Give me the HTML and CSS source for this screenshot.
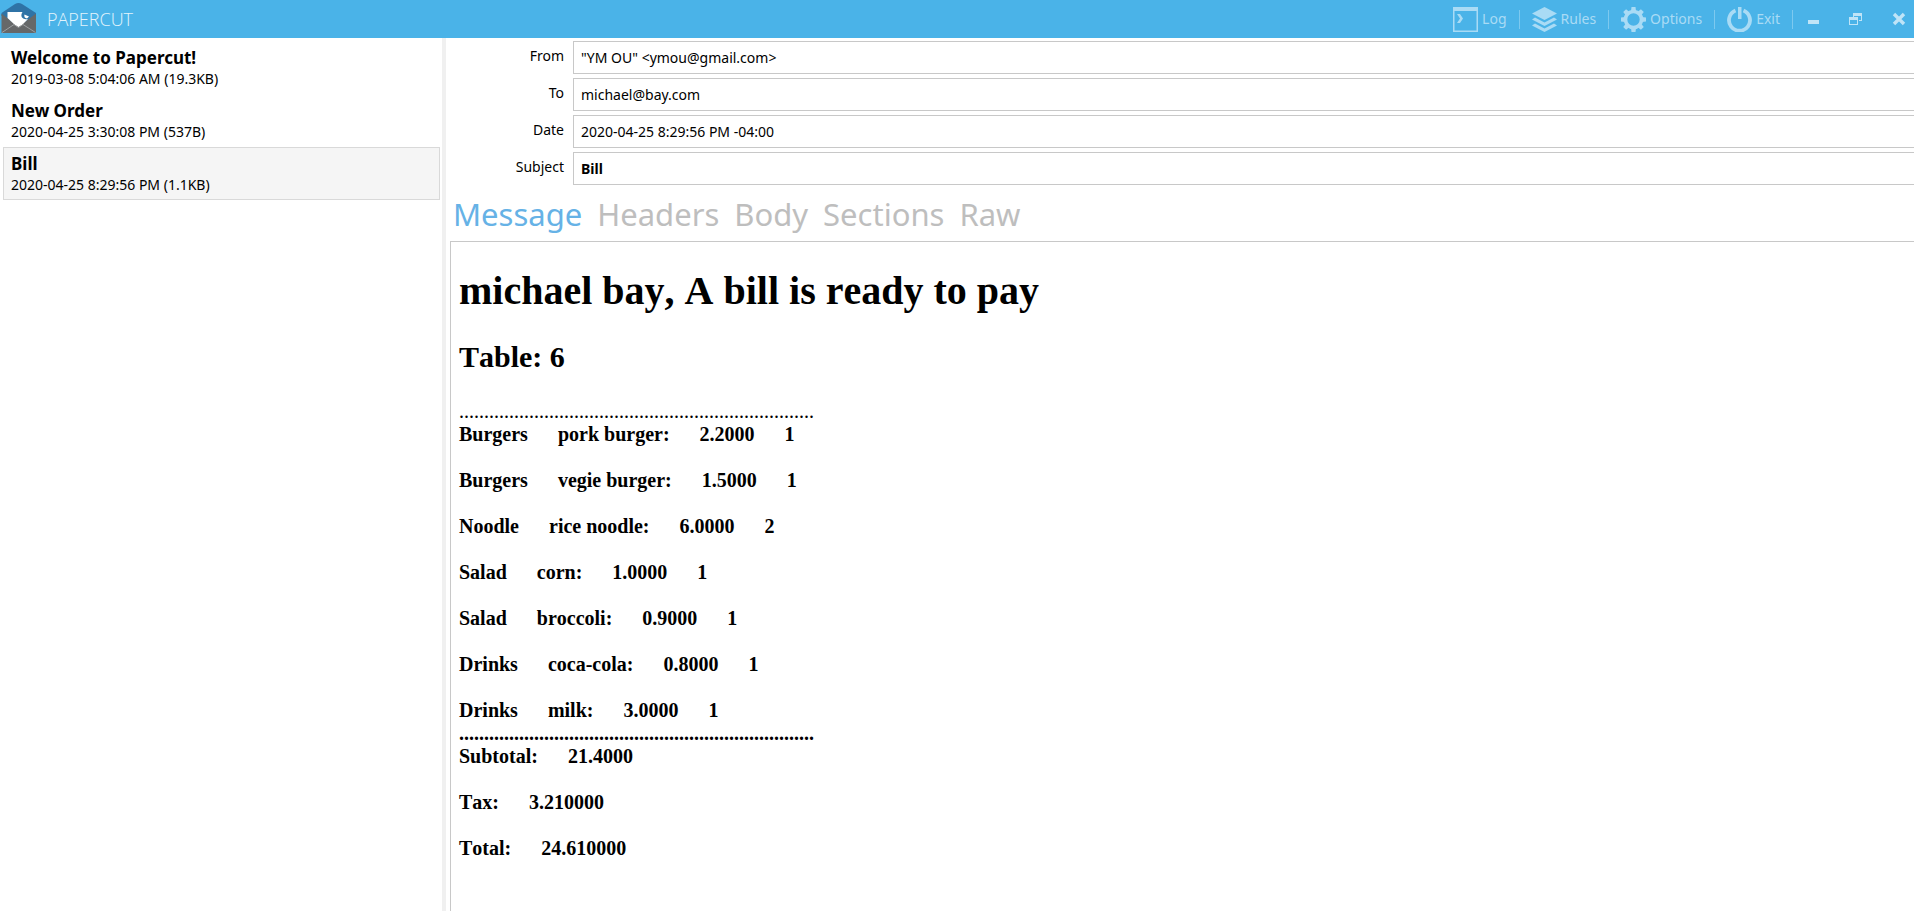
FILE: index.html
```
<!DOCTYPE html>
<html lang="en">
<head>
<meta charset="utf-8">
<title>Papercut</title>
<link rel="stylesheet" href="styles.css">
</head>
<body>
<div class="app">
  <header class="titlebar">
    <svg class="logo" viewBox="0 0 38 38" aria-hidden="true">
      <path fill="#2f73a6" d="M1.500 13 15 4Q18.500 2 22 4L36 13V16H1.500z"/>
      <path fill="#666869" d="M1.500 14H36V33H1.500z"/>
      <path fill="#2f73a6" d="M2 14H35.500L22 24H15z"/>
      <path fill="#fff" d="M7.500 12H22.500Q20.500 15 22 17.500Q24 20 28 19L22 25 18.500 27 15 25 7.500 18z"/>
      <path fill="#fff" d="M24.500 14.500 29 16.500 27 18.500Q23.500 18 24.500 14.500z"/>
      <path fill="none" stroke="#9c9fa1" stroke-width="1" d="M2 32.500 14 24.500 18.500 27.500 23 24.500 35.500 32.500"/>
    </svg>
    <h1 class="brand">PAPERCUT</h1>
    <nav class="commands" aria-label="Commands">
      <button class="command" type="button">
        <svg class="icon" viewBox="0 0 25 25" aria-hidden="true"><path fill-rule="evenodd" d="M0 0H25V25H0zM1.500 4V23.500H23.500V4z"/><path d="M4 7H7L10 11.500 7 16H4L7 11.500z"/></svg>
        Log
      </button>
      <button class="command" type="button">
        <svg class="icon" viewBox="0 0 25 25" aria-hidden="true"><path d="M12.500 0 25 6.500 12.500 13 0 6.500zM3 10.500 12.500 15.500 22 10.500 25 12.500 12.500 19 0 12.500zM3 16.500 12.500 21.500 22 16.500 25 18.500 12.500 25 0 18.500z"/></svg>
        Rules
      </button>
      <button class="command" type="button">
        <svg class="icon" viewBox="0 0 25 25" aria-hidden="true"><circle cx="12.500" cy="12.500" r="8" fill="none" stroke="currentColor" stroke-width="3.600"/><path id="tooth" d="M10 4 10.500 0H14.500L15 4z"/><use href="#tooth" transform="rotate(45 12.500 12.500)"/><use href="#tooth" transform="rotate(90 12.500 12.500)"/><use href="#tooth" transform="rotate(135 12.500 12.500)"/><use href="#tooth" transform="rotate(180 12.500 12.500)"/><use href="#tooth" transform="rotate(225 12.500 12.500)"/><use href="#tooth" transform="rotate(270 12.500 12.500)"/><use href="#tooth" transform="rotate(315 12.500 12.500)"/></svg>
        Options
      </button>
      <button class="command" type="button">
        <svg class="icon" viewBox="0 0 25 25" aria-hidden="true"><path d="M8.500 3.500A10.500 10.500 0 1 0 16.500 3.500" fill="none" stroke="currentColor" stroke-width="3.800"/><path d="M11 0H14.500V12H11z"/></svg>
        Exit
      </button>
    </nav>
    <div class="window-buttons">
      <button class="window-button" type="button" aria-label="Minimize"><svg viewBox="0 0 14 14" aria-hidden="true"><path d="M1 8H12V12H1z"/></svg></button>
      <button class="window-button" type="button" aria-label="Restore"><svg viewBox="0 0 14 14" aria-hidden="true"><path fill-rule="evenodd" d="M4 1H13V9H10V8H12V4H5V5H4zM0 5H9V13H0zM1 8V12H8V8z"/></svg></button>
      <button class="window-button close" type="button" aria-label="Close"><svg viewBox="0 0 14 14" aria-hidden="true"><path d="M2 2 12 12M12 2 2 12" fill="none" stroke="currentColor" stroke-width="3.400"/></svg></button>
    </div>
  </header>
  <div class="workspace">
    <aside class="inbox" aria-label="Messages">
      <button class="mail" type="button"><strong class="mail-title">Welcome to Papercut!</strong><span>2019-03-08 5:04:06 AM (19.3KB)</span></button>
      <button class="mail" type="button"><strong class="mail-title">New Order</strong><span>2020-04-25 3:30:08 PM (537B)</span></button>
      <button class="mail selected" type="button"><strong class="mail-title">Bill</strong><span>2020-04-25 8:29:56 PM (1.1KB)</span></button>
    </aside>
    <main class="reader">
      <div class="fields">
        <label for="from">From</label><input id="from" type="text" value="&quot;YM OU&quot; &lt;ymou@gmail.com&gt;" readonly>
        <label for="to">To</label><input id="to" type="text" value="michael@bay.com" readonly>
        <label for="date">Date</label><input id="date" type="text" value="2020-04-25 8:29:56 PM -04:00" readonly>
        <label for="subject">Subject</label><input id="subject" class="subject" type="text" value="Bill" readonly>
      </div>
      <div class="tabs" role="tablist">
        <button class="tab active" type="button" role="tab" aria-selected="true">Message</button>
        <button class="tab" type="button" role="tab" aria-selected="false">Headers</button>
        <button class="tab" type="button" role="tab" aria-selected="false">Body</button>
        <button class="tab" type="button" role="tab" aria-selected="false">Sections</button>
        <button class="tab" type="button" role="tab" aria-selected="false">Raw</button>
      </div>
      <article class="message">
        <h2 class="headline">michael bay, A bill is ready to pay</h2>
        <h3 class="table-number">Table: 6</h3>
        <div class="rule">.......................................................................</div>
        <div class="lines">
          <p><span>Burgers</span><span>pork burger:</span><span>2.2000</span><span>1</span></p>
          <p><span>Burgers</span><span>vegie burger:</span><span>1.5000</span><span>1</span></p>
          <p><span>Noodle</span><span>rice noodle:</span><span>6.0000</span><span>2</span></p>
          <p><span>Salad</span><span>corn:</span><span>1.0000</span><span>1</span></p>
          <p><span>Salad</span><span>broccoli:</span><span>0.9000</span><span>1</span></p>
          <p><span>Drinks</span><span>coca-cola:</span><span>0.8000</span><span>1</span></p>
          <p><span>Drinks</span><span>milk:</span><span>3.0000</span><span>1</span></p>
        </div>
        <div class="rule bold">.......................................................................</div>
        <div class="lines">
          <p><span>Subtotal:</span><span>21.4000</span></p>
          <p><span>Tax:</span><span>3.210000</span></p>
          <p><span>Total:</span><span>24.610000</span></p>
        </div>
      </article>
    </main>
  </div>
</div>
</body>
</html>
```
FILE: styles.css
```
* { box-sizing: border-box; }
body {
  margin: 0;
  background: #fff;
  color: #000;
  font: 14px/20px "Noto Sans", "Open Sans", sans-serif;
}
button, input { font: inherit; color: inherit; }
button { border: 0; padding: 0; background: none; }
p, h1, h2, h3 { margin: 0; }

.app { display: flex; flex-direction: column; min-height: 100vh; }

.titlebar {
  display: flex;
  align-items: center;
  height: 38px;
  background: #4ab3e8;
  color: #a9dbf5;
}
.logo { width: 38px; height: 38px; }
.brand {
  margin-left: 9px;
  color: #e2f3fc;
  font: 300 18px/38px "Open Sans", sans-serif;
}
.commands { display: flex; margin-left: auto; }
.command {
  display: flex;
  align-items: center;
  gap: 4px;
  height: 19px;
  padding: 0 12px;
  border-right: 1px solid #7dc9ef;
}
.icon { width: 25px; height: 25px; fill: currentColor; }
.window-buttons { display: flex; color: #bfe4f7; }
.window-button {
  display: flex;
  align-items: center;
  justify-content: center;
  width: 42px;
  height: 38px;
}
.window-button.close { width: 37px; padding-left: 7px; }
.window-button svg { width: 14px; height: 14px; fill: currentColor; }

.workspace { display: flex; flex: 1; }
.inbox {
  flex: 0 0 446px;
  padding: 3px 2px 0 3px;
  border-right: 4px solid #f0f0f0;
}
.mail {
  display: flex;
  flex-direction: column;
  width: 100%;
  height: 53px;
  padding: 5px 7px 3px;
  border: 1px solid transparent;
  text-align: left;
}
.mail.selected { border-color: #d9d9d9; background: #f5f5f5; }
.mail-title { font-size: 17px; line-height: 22px; }

.reader { display: flex; flex: 1; flex-direction: column; min-width: 0; }
.fields {
  display: grid;
  grid-template-columns: 118px 1fr;
  column-gap: 9px;
  row-gap: 4px;
  padding-top: 3px;
}
.fields label { padding-top: 5px; text-align: right; }
.fields input {
  width: 100%;
  height: 33px;
  padding: 0 7px;
  border: 1px solid #c8c8c8;
  border-right: 0;
  background: #fff;
}
.fields .subject { font-weight: 700; }

.tabs { display: flex; gap: 15px; padding: 5px 7px 3px; }
.tab { color: #bebebe; font-size: 31px; line-height: 48px; }
.tab.active { color: #66b2e6; }

.message {
  flex: 1;
  margin-left: 4px;
  padding: 26px 8px 20px;
  border: solid #c8c8c8;
  border-width: 1px 0 0 1px;
  font: 20px/23px "Liberation Serif", "Times New Roman", serif;
  font-kerning: none;
}
.headline { font-size: 40px; line-height: 46px; }
.table-number { margin: 26px 0; font-size: 30px; line-height: 34px; }
.bold { font-weight: 700; }
.lines { display: grid; gap: 23px; font-weight: 700; }
.lines p { display: flex; gap: 30px; }
```
